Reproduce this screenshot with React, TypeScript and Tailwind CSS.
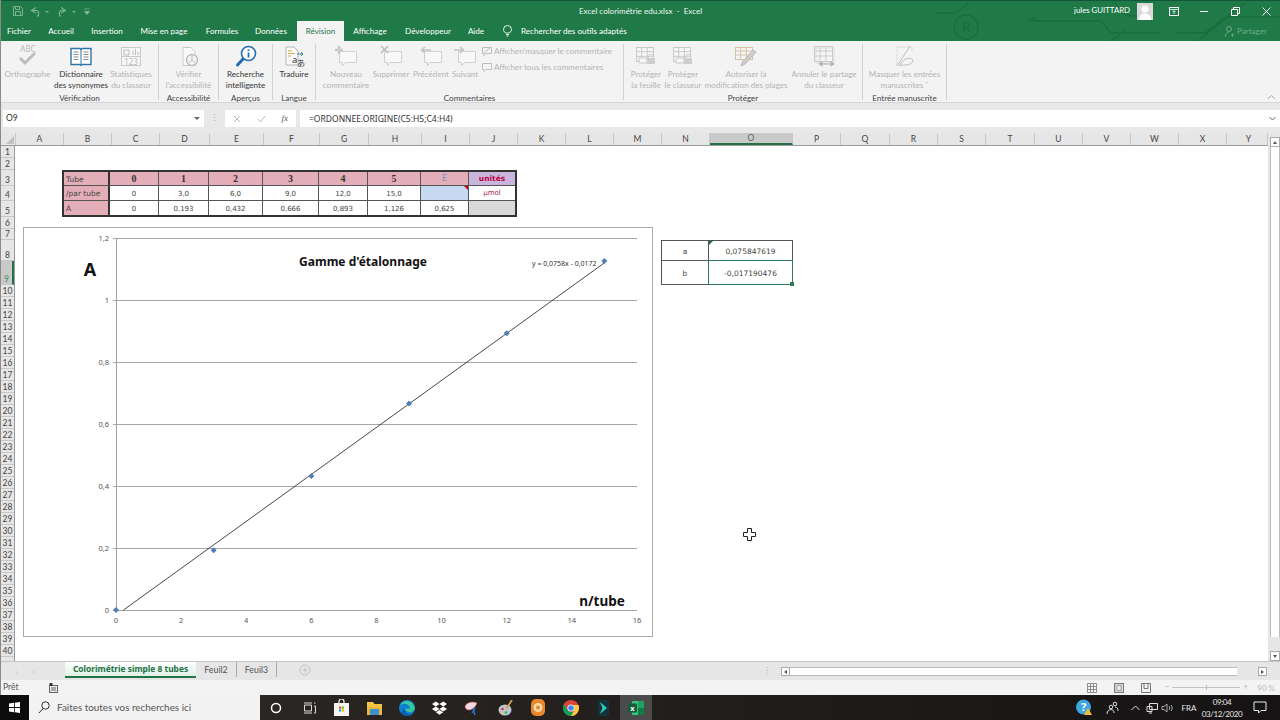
import React from "react";

const G = "#c9c9c9";
const FONT = "font-['Lato','Noto_Sans',sans-serif]";
const NOTO = "font-['Noto_Sans',sans-serif]";

const SheetGrid = ({ x, y, w, h, c = G }: { x: number; y: number; w: number; h: number; c?: string }) => (
  <g stroke={c} strokeWidth="1" fill="#f6f6f6">
    <rect x={x + 0.5} y={y + 0.5} width={w} height={h} />
    <path d={`M${x + w / 3} ${y}V${y + h}M${x + (2 * w) / 3} ${y}V${y + h}M${x} ${y + h / 3}H${x + w}M${x} ${y + (2 * h) / 3}H${x + w}`} fill="none" />
  </g>
);

const IconBox = ({ w = 28, children }: { w?: number; children: React.ReactNode }) => (
  <svg width={w} height={24} viewBox={`0 0 ${w} 24`} className="block">
    {children}
  </svg>
);

const IAbc = () => (
  <IconBox>
    <text x="14" y="8" textAnchor="middle" fontSize="8" fill="#b9b9b9" fontFamily="Noto Sans">ABC</text>
    <path d="M6 14l5 5 10-10" fill="none" stroke="#bdbdbd" strokeWidth="3" />
  </IconBox>
);
const IBook = () => (
  <IconBox>
    <path d="M4 4.5h9l1 1 1-1h9v16h-9l-1 .8-1-.8H4z" fill="#fff" stroke="#2f74a8" strokeWidth="1.4" />
    <path d="M14 5.5v15" stroke="#2f74a8" strokeWidth="1" />
    <path d="M6.5 8h5M6.5 10.5h5M6.5 13h5M6.5 15.5h5M16.5 8h5M16.5 10.5h5M16.5 13h5M16.5 15.5h5" stroke="#7c7c7c" strokeWidth="0.9" />
  </IconBox>
);
const IStats = () => (
  <IconBox>
    <rect x="4.5" y="3.5" width="19" height="18" fill="#f6f6f6" stroke={G} />
    <path d="M7 6h5v5H7zM16 11V7M18.5 11V5M21 11V8" fill="none" stroke="#bdbdbd" />
    <path d="M4.5 12.5h19" stroke={G} />
    <text x="14" y="20.5" textAnchor="middle" fontSize="8" fill="#bdbdbd" fontFamily="Noto Sans">123</text>
  </IconBox>
);
const IDoc = () => (
  <IconBox>
    <path d="M8 3.5h8l4 4v14H8z" fill="#fafafa" stroke={G} />
    <circle cx="17" cy="16" r="5.5" fill="#f4f4f4" stroke="#bcbcbc" strokeWidth="1.4" />
    <path d="M17 11v5l-3.5 3M17 16l3.5 3" stroke="#bcbcbc" fill="none" />
  </IconBox>
);
const IMag = () => (
  <IconBox>
    <circle cx="16.5" cy="9.5" r="7" fill="#fff" stroke="#1f6cb0" strokeWidth="1.6" />
    <path d="M16.5 5.5v1.4M16.5 8.5v5" stroke="#1f6cb0" strokeWidth="1.8" />
    <path d="M11 15L5.5 21" stroke="#1f6cb0" strokeWidth="3" strokeLinecap="round" />
  </IconBox>
);
const ITrans = () => (
  <IconBox>
    <path d="M6 3h8l4 4v14H6z" fill="#fafafa" stroke="#b5b5b5" />
    <path d="M8 7h4M8 9.5h7M8 12h3" stroke="#d4a94e" strokeWidth="1" />
    <text x="12" y="19" fontSize="9.5" fill="#333" fontFamily="Noto Sans">a</text>
    <text x="17" y="22" fontSize="8" fill="#333" fontFamily="Noto Sans CJK JP">あ</text>
    <path d="M17 10h6M21 8l2 2-2 2" stroke="#2f74a8" fill="none" strokeWidth="0.9" />
  </IconBox>
);
const Bubble = ({ x = 7 }: { x?: number }) => (
  <path d={`M${x + 0.5} 7.5h17v11h-11l-3 3v-3h-3z`} fill="#f8f8f8" stroke="#d0d0d0" />
);
const INew = () => (
  <IconBox>
    <Bubble />
    <path d="M7 2v8M3 6h8" stroke="#c8c8c8" strokeWidth="2.6" />
  </IconBox>
);
const IDel = () => (
  <IconBox>
    <Bubble />
    <path d="M4 2l7 7M11 2L4 9" stroke="#bbb" strokeWidth="1.6" />
  </IconBox>
);
const ILeft = () => (
  <IconBox>
    <Bubble />
    <path d="M14 6H5M8 3L4.5 6 8 9" stroke="#c4c4c4" strokeWidth="1.6" fill="none" />
  </IconBox>
);
const IRight = () => (
  <IconBox>
    <Bubble />
    <path d="M3 6h9M9 3l3.5 3L9 9" stroke="#c4c4c4" strokeWidth="1.6" fill="none" />
  </IconBox>
);
const Lock = ({ x, y }: { x: number; y: number }) => (
  <g>
    <rect x={x} y={y + 3} width="8" height="6" fill="#cdcdcd" />
    <path d={`M${x + 1.5} ${y + 3}v-1.2a2.5 2.5 0 0 1 5 0v1.2`} fill="none" stroke="#cdcdcd" />
  </g>
);
const ILock = () => (
  <IconBox>
    <SheetGrid x={4} y={3} w={17} h={14} />
    <path d="M7 14h8v5H7z" fill="#f6f6f6" stroke={G} />
    <Lock x={15} y={11} />
  </IconBox>
);
const IPencil = () => (
  <IconBox>
    <SheetGrid x={3} y={3} w={17} h={12} c="#d3c4a8" />
    <path d="M24 8L13 20l-4 2 1.500-4L21 6z" fill="#cfcfcf" stroke="#b8b8b8" />
  </IconBox>
);
const IShare = () => (
  <IconBox>
    <SheetGrid x={4} y={2} w={18} h={15} />
    <rect x="6" y="4" width="18" height="15" fill="none" stroke="#dcdcdc" />
    <path d="M10 20h13M12.500 18l-3 2 3 2M20.500 18l3 2-3 2" stroke="#a9a9a9" fill="none" strokeWidth="1.1" />
  </IconBox>
);
const IInk = () => (
  <IconBox>
    <path d="M6 3h15v4M6 3v19" stroke="#cfcfcf" strokeDasharray="1.500 1" fill="none" />
    <path d="M6 22L19 2M9 21c3-6 8-8 12-6 3 3-2 6-7 6-2 0-4 0-6 1" stroke="#bdbdbd" fill="none" />
  </IconBox>
);

const RBtn = ({ w, icon, l1, l2, on }: { w: string; icon: React.ReactNode; l1: string; l2?: string; on?: boolean }) => (
  <div className={`${w} flex flex-col items-center shrink-0`}>
    <div className="h-[25px] flex items-start justify-center">{icon}</div>
    <div className={`h-[11px] leading-[11px] whitespace-nowrap ${on ? "text-[#333]" : "text-[#b4b4b4]"}`}>{l1}</div>
    {l2 && <div className={`h-[11px] leading-[11px] whitespace-nowrap ${on ? "text-[#333]" : "text-[#b4b4b4]"}`}>{l2}</div>}
  </div>
);

const Group = ({ w, label, children }: { w: string; label: string; children: React.ReactNode }) => (
  <div className={`${w} shrink-0 flex flex-col h-[59px] pt-[3px]`}>
    <div className="flex h-[48px] shrink-0">{children}</div>
    <div className="text-center text-[#444] leading-[13px] whitespace-nowrap">{label}</div>
  </div>
);
const Sep = () => <div className="w-px h-[56px] mt-[3px] bg-[#d2d2d2] shrink-0" />;

const tabs = [
  { t: "Fichier", w: "w-[36px]" },
  { t: "Accueil", w: "w-[48px]" },
  { t: "Insertion", w: "w-[44px]" },
  { t: "Mise en page", w: "w-[70px]" },
  { t: "Formules", w: "w-[46px]" },
  { t: "Données", w: "w-[52px]" },
  { t: "Révision", w: "w-[47px]", active: true },
  { t: "Affichage", w: "w-[52px]" },
  { t: "Développeur", w: "w-[64px]" },
  { t: "Aide", w: "w-[32px]" },
];

const cols = [
  ["A", "w-[48px]"], ["B", "w-[48px]"], ["C", "w-[48px]"], ["D", "w-[50px]"], ["E", "w-[54px]"], ["F", "w-[56px]"], ["G", "w-[49px]"], ["H", "w-[53px]"],
  ["I", "w-[48px]"], ["J", "w-[48px]"], ["K", "w-[48px]"], ["L", "w-[48px]"], ["M", "w-[48px]"], ["N", "w-[48px]"], ["O", "w-[83px]"], ["P", "w-[48px]"],
  ["Q", "w-[49px]"], ["R", "w-[48px]"], ["S", "w-[48px]"], ["T", "w-[49px]"], ["U", "w-[48px]"], ["V", "w-[48px]"], ["W", "w-[48px]"], ["X", "w-[48px]"], ["Y", "w-[41px] pl-[3px]"],
];

const rowHeights: Record<number, string> = { 3: "h-[16px]", 4: "h-[15px]", 5: "h-[16px]", 7: "h-[11px]", 8: "h-[21px]", 9: "h-[24px]" };
const rows = Array.from({ length: 40 }, (_, i) => i + 1);

const Cell = ({ c, children }: { c: string; children?: React.ReactNode }) => (
  <div className={`relative flex items-center justify-center border-r border-b border-[#555] ${c}`}>{children}</div>
);

const numFont = "font-['DejaVu_Sans',sans-serif] text-[7px] text-[#444] pt-[2px]";
const headFont = "font-['Liberation_Serif',serif] font-bold text-[10px] text-[#333] bg-[#e4aeb9]";
const labFont = "!justify-start pl-[2px] pt-[2px] font-['DejaVu_Sans',sans-serif] text-[7.500px] text-[#444] bg-[#e4aeb9]";

const SheetTable = () => (
  <div className="ml-[47px] mt-[24px] w-[455px] h-[47px] border-2 border-[#333] grid grid-cols-[46px_49px_50px_54px_56px_49px_53px_48px_46px] grid-rows-[14px_15px_14px]">
    <Cell c={`${labFont} border-r-2 border-r-[#333]`}>Tube</Cell>
    {["0", "1", "2", "3", "4", "5"].map((v) => (
      <Cell key={v} c={headFont}>{v}</Cell>
    ))}
    <Cell c="bg-[#e4aeb9] text-[8px] text-[#7f8cc8] font-['DejaVu_Sans',sans-serif]">E</Cell>
    <Cell c="bg-[#c9b6dd] text-[7.500px] font-bold text-[#b8003f] font-['DejaVu_Sans',sans-serif] border-r-0">unités</Cell>

    <Cell c={`${labFont} border-r-2 border-r-[#333]`}>/par tube</Cell>
    {["0", "3,0", "6,0", "9,0", "12,0", "15,0"].map((v, i) => (
      <Cell key={i} c={numFont}>{v}</Cell>
    ))}
    <Cell c="bg-[#c6d9f1]">
      <span className="absolute top-0 right-0 w-0 h-0 border-t-[4px] border-l-[4px] border-t-[#c00000] border-l-transparent" />
    </Cell>
    <Cell c="text-[7px] text-[#a6244f] font-['DejaVu_Sans',sans-serif] border-r-0">µmol</Cell>

    <Cell c={`${labFont} border-r-2 border-r-[#333] border-b-0`}>A</Cell>
    {["0", "0,193", "0,432", "0,666", "0,893", "1,126", "0,625"].map((v, i) => (
      <Cell key={i} c={`${numFont} border-b-0`}>{v}</Cell>
    ))}
    <Cell c="bg-[#d9d9d9] border-r-0 border-b-0" />
  </div>
);

const px = (x: number) => 116 + x * 32.56;
const py = (y: number) => 610 - y * 310;

const Chart = () => (
  <div className="w-[630px] h-[410px] border border-[#a9a9a9] bg-white shrink-0">
    <svg width="628" height="408" viewBox="24 228 628 408" className="block">
      {[0.2, 0.4, 0.6, 0.8, 1, 1.2].map((v) => (
        <path key={v} d={`M113 ${py(v)}H637`} stroke="#a6a6a6" strokeWidth="1" shapeRendering="crispEdges" />
      ))}
      <path d="M116 238V610M113 610H637" stroke="#a0a0a0" strokeWidth="1" fill="none" shapeRendering="crispEdges" />
      {[0, 2, 4, 6, 8, 10, 12, 14, 16].map((v) => (
        <text key={v} x={px(v)} y="623" textAnchor="middle" fontSize="7.500" fill="#555" fontFamily="Noto Sans">{v}</text>
      ))}
      {[["0", 0], ["0,2", 0.2], ["0,4", 0.4], ["0,6", 0.6], ["0,8", 0.8], ["1", 1], ["1,2", 1.2]].map(([l, v]) => (
        <text key={l as string} x="109" y={py(v as number) + 2.5} textAnchor="end" fontSize="7.500" fill="#555" fontFamily="Noto Sans">{l}</text>
      ))}
      <path d={`M${px(0.23)} 610L${px(15)} ${py(1.1198)}`} stroke="#333" strokeWidth="0.9" />
      {[[0, 0], [3, 0.193], [6, 0.432], [9, 0.666], [12, 0.893], [15, 1.126]].map(([a, b]) => (
        <path key={a} d={`M${px(a)} ${py(b) - 3}l3 3-3 3-3-3z`} fill="#4f7fb8" />
      ))}
      <text x="363" y="266" textAnchor="middle" fontSize="12" fontWeight="700" fill="#111" fontFamily="Noto Sans">Gamme d'étalonnage</text>
      <text x="90" y="276" textAnchor="middle" fontSize="18" fontWeight="700" fill="#111" fontFamily="Noto Sans">A</text>
      <text x="602" y="606" textAnchor="middle" fontSize="13.500" fontWeight="700" fill="#111" fontFamily="Noto Sans">n/tube</text>
      <text x="532" y="265.500" fontSize="7" fill="#333" fontFamily="Noto Sans">y = 0,0758x - 0,0172</text>
    </svg>
  </div>
);

const AbTable = () => (
  <div className="ml-[8px] mt-[13px] grid grid-cols-[47px_83px] grid-rows-[20px_23px] border border-[#555] w-[132px] h-[45px] text-[7.500px] text-[#444] font-['DejaVu_Sans',sans-serif] shrink-0">
    <div className="flex items-center justify-center pt-[2px] border-r border-b border-[#555]">a</div>
    <div className="relative flex items-center justify-center pt-[2px] border-b border-[#555]">
      0,075847619
      <span className="absolute top-0 left-0 w-0 h-0 border-t-[4px] border-r-[4px] border-t-[#217346] border-r-transparent" />
    </div>
    <div className="flex items-center justify-center pt-[2px] border-r border-[#555]">b</div>
    <div className="relative flex items-center justify-center pt-[2px] outline outline-[1.500px] outline-[#2f7d57]">
      -0,017190476
      <span className="absolute -bottom-[2px] -right-[2px] w-[4px] h-[4px] bg-[#2f7d57]" />
    </div>
  </div>
);

const Tray = ({ w, children }: { w: string; children: React.ReactNode }) => (
  <div className={`${w} h-full flex items-center justify-center shrink-0`}>{children}</div>
);
const TB = ({ children, c = "" }: { children: React.ReactNode; c?: string }) => (
  <div className={`w-[32.700px] h-full flex items-center justify-center shrink-0 ${c}`}>{children}</div>
);

export default function App() {
  return (
    <div className={`w-[1280px] h-[720px] overflow-hidden flex flex-col text-[8.500px] ${FONT}`}>
      <div className="h-[695px] flex flex-col border-l border-[#8a8a8a] shrink-0">
        {/* Green header */}
        <div className="relative h-[41px] shrink-0 bg-[#1f7a47] border-t border-[#14563a] text-white">
          <svg width="345" height="41" viewBox="0 0 345 41" className="absolute right-0 top-0">
            <g stroke="#1b6d40" strokeWidth="1.400" fill="none">
              <circle cx="31" cy="26" r="12" />
              <path d="M0 12H20L34 2M96 20h70l10 12h50M100 20a3 3 0 1 0-6 0M180 0c4 18 30 22 40 0M240 32h30l40-30M262 41l30-25h53M175 41l15-12" />
            </g>
            <text x="31" y="31" textAnchor="middle" fontSize="14" fill="#1b6d40" fontFamily="Noto Sans">R</text>
          </svg>
          <div className="relative grid grid-cols-[1fr_auto_1fr] h-[20px] items-center">
            <div className="flex items-center pl-[11px] gap-[4px] opacity-50">
              <svg width="12" height="12" viewBox="0 0 12 12">
                <path d="M1.500 1.500h7l2 2v7h-9z" fill="none" stroke="#d7ead9" />
                <path d="M3.500 1.500v3h4v-3M3.500 10.500v-4h5v4" fill="none" stroke="#d7ead9" />
              </svg>
              <svg width="24" height="12" viewBox="0 0 24 12">
                <path d="M8 2.500L3.500 5.500 8 8M4 5.500h5a3.500 3.500 0 0 1 0 6" fill="none" stroke="#d7ead9" strokeWidth="1.200" />
                <path d="M17 6h4l-2 2z" fill="#d7ead9" />
              </svg>
              <svg width="24" height="12" viewBox="0 0 24 12">
                <path d="M5 2.500L9.500 5.500 5 8M9 5.500H5a3.500 3.500 0 0 0 0 6" fill="none" stroke="#d7ead9" strokeWidth="1.200" />
                <path d="M16 6h4l-2 2z" fill="#d7ead9" />
              </svg>
              <svg width="6" height="7" viewBox="0 0 6 7">
                <path d="M0 1h6M.5 3.500h5L3 6.500z" fill="#fff" stroke="#fff" strokeWidth=".6" />
              </svg>
            </div>
            <div className="whitespace-pre text-[8.050px] text-[#eef6f0]">Excel colorimétrie edu.xlsx  -  Excel</div>
            <div className="flex items-center justify-end h-full">
              <span className="text-[7.800px] mr-[7px]">jules GUITTARD</span>
              <div className="w-[16px] h-[17px] bg-[#f2f2f2] mr-[16px] flex items-end justify-center overflow-hidden">
                <svg width="16" height="17" viewBox="0 0 16 17">
                  <rect width="16" height="17" fill="#d9d9d9" />
                  <circle cx="8" cy="6" r="3.500" fill="#fff" />
                  <path d="M2 17c0-5 3-6.500 6-6.500S14 12 14 17z" fill="#fff" />
                </svg>
              </div>
              <svg width="10" height="9" viewBox="0 0 10 9" className="mr-[21px]">
                <rect x="0.500" y="0.500" width="9" height="8" fill="none" stroke="#fff" />
                <path d="M0 2.500h10M5 7V4M3.500 5L5 3.500 6.500 5" stroke="#fff" fill="none" strokeWidth="0.800" />
              </svg>
              <svg width="8" height="8" viewBox="0 0 8 8" className="mr-[23px]"><path d="M0 4.500h8" stroke="#fff" /></svg>
              <svg width="9" height="9" viewBox="0 0 9 9" className="mr-[22px]">
                <path d="M0.500 2.500h6v6h-6zM2.500 2.500v-2h6v6h-2" fill="none" stroke="#fff" />
              </svg>
              <svg width="9" height="9" viewBox="0 0 9 9" className="mr-[9px]"><path d="M0.500 0.500l8 8M8.500 0.500l-8 8" stroke="#fff" /></svg>
            </div>
          </div>
          <div className="relative flex h-[20px] items-stretch text-[8.100px]">
            {tabs.map((t) => (
              <div key={t.t} className={`${t.w} flex items-center justify-center whitespace-nowrap shrink-0 ${t.active ? "bg-[#f3f3f3] text-[#217346]" : "text-white"}`}>
                {t.t}
              </div>
            ))}
            <div className="flex items-center ml-[11px]">
              <svg width="9" height="12" viewBox="0 0 9 12">
                <path d="M2.500 8C1 6.500.500 5.500.500 4.500a4 4 0 0 1 8 0C8.500 5.500 8 6.500 6.500 8zM3 9.500h3M3.500 11h2" fill="none" stroke="#fff" strokeWidth="0.900" />
              </svg>
              <span className="ml-[9px] whitespace-nowrap">Rechercher des outils adaptés</span>
            </div>
            <div className="ml-auto mr-[13px] flex items-center gap-[3px] text-[#6da98a]">
              <svg width="9" height="11" viewBox="0 0 9 11">
                <circle cx="4" cy="3" r="2.500" fill="none" stroke="#6da98a" />
                <path d="M.5 10.500c0-3 1.500-4.500 3.500-4.500M6 9h3M7.500 7.500v3" fill="none" stroke="#6da98a" />
              </svg>
              <span>Partager</span>
            </div>
          </div>
        </div>

        {/* Ribbon */}
        <div className="h-[62px] shrink-0 bg-[#f3f3f3] border-b border-[#d6d6d6] flex relative text-[8.100px]">
          <Group w="w-[157px]" label="Vérification">
            <RBtn w="w-[53px]" icon={<IAbc />} l1="Orthographe" />
            <RBtn w="w-[54px]" icon={<IBook />} l1="Dictionnaire" l2="des synonymes" on />
            <RBtn w="w-[46px]" icon={<IStats />} l1="Statistiques" l2="du classeur" />
          </Group>
          <Sep />
          <Group w="w-[59px]" label="Accessibilité">
            <RBtn w="w-[59px]" icon={<IDoc />} l1="Vérifier" l2="l'accessibilité" />
          </Group>
          <Sep />
          <Group w="w-[53px]" label="Aperçus">
            <RBtn w="w-[53px]" icon={<IMag />} l1="Recherche" l2="intelligente" on />
          </Group>
          <Sep />
          <Group w="w-[42px]" label="Langue">
            <RBtn w="w-[42px]" icon={<ITrans />} l1="Traduire" on />
          </Group>
          <Sep />
          <Group w="w-[307px]" label="Commentaires">
            <RBtn w="w-[60px]" icon={<INew />} l1="Nouveau" l2="commentaire" />
            <RBtn w="w-[30px]" icon={<IDel />} l1="Supprimer" />
            <RBtn w="w-[50px]" icon={<ILeft />} l1="Précédent" />
            <RBtn w="w-[18px]" icon={<IRight />} l1="Suivant" />
            <div className="ml-[8px] flex flex-col text-[#b4b4b4] whitespace-nowrap pt-[1px] gap-[4px]">
              <div className="h-[12px] flex items-center gap-[2px]">
                <svg width="10" height="10" viewBox="0 0 10 10">
                  <path d="M.5 1.500h9v6H4L2 9.500v-2H.5zM2 7l6-5" fill="none" stroke="#bdbdbd" />
                </svg>
                Afficher/masquer le commentaire
              </div>
              <div className="h-[12px] flex items-center gap-[2px]">
                <svg width="10" height="10" viewBox="0 0 10 10">
                  <path d="M.5 1.500h9v6H4L2 9.500v-2H.5z" fill="none" stroke="#bdbdbd" />
                </svg>
                Afficher tous les commentaires
              </div>
            </div>
          </Group>
          <Sep />
          <Group w="w-[238px]" label="Protéger">
            <RBtn w="w-[44px]" icon={<ILock />} l1="Protéger" l2="la feuille" />
            <RBtn w="w-[30px]" icon={<ILock />} l1="Protéger" l2="le classeur" />
            <RBtn w="w-[96px]" icon={<IPencil />} l1="Autoriser la" l2="modification des plages" />
            <RBtn w="w-[60px]" icon={<IShare />} l1="Annuler le partage" l2="du classeur" />
          </Group>
          <Sep />
          <Group w="w-[83px]" label="Entrée manuscrite">
            <RBtn w="w-[83px]" icon={<IInk />} l1="Masquer les entrées" l2="manuscrites ˇ" />
          </Group>
          <Sep />
          <svg width="9" height="6" viewBox="0 0 9 6" className="absolute right-[4px] bottom-[2px]">
            <path d="M1 5l3.500-3.500L8 5" fill="none" stroke="#aaa" />
          </svg>
        </div>

        {/* Formula bar */}
        <div className="h-[30px] shrink-0 bg-[#e8e8e8] flex pt-[7px] pb-[6px] items-stretch">
          <div className="w-[201px] ml-[2px] bg-white flex items-center justify-between pl-[3px] pr-[4px] text-[#333]">
            <span>O9</span>
            <span className="w-0 h-0 border-x-[3px] border-x-transparent border-t-[3px] border-t-[#666]" />
          </div>
          <div className="w-[21px] flex items-center justify-center text-[#aaa] leading-none">⋮</div>
          <div className="w-[71px] bg-white flex items-center justify-between px-[8px]">
            <svg width="8" height="8" viewBox="0 0 8 8"><path d="M1 1l6 6M7 1L1 7" stroke="#bbb" /></svg>
            <svg width="9" height="8" viewBox="0 0 9 8"><path d="M1 4l2.500 3L8 1" stroke="#bbb" fill="none" /></svg>
            <span className="italic font-['Liberation_Serif',serif] text-[9px] text-[#555]">fx</span>
          </div>
          <div className="flex-1 ml-[4px] bg-white flex items-center justify-between pl-[9px] pr-[4px] text-[#333]">
            <span className={`${NOTO} text-[8.500px] pt-px`}>=ORDONNEE.ORIGINE(C5:H5;C4:H4)</span>
            <svg width="7" height="5" viewBox="0 0 7 5"><path d="M.5 1l3 3 3-3" fill="none" stroke="#666" /></svg>
          </div>
        </div>

        {/* Sheet */}
        <div className="h-[528px] shrink-0 flex overflow-hidden">
          <div className="flex-1 flex flex-col min-w-0">
            <div className="h-[13px] flex shrink-0 bg-[#e6e6e6] border-b border-[#9a9a9a] text-[#444] text-[8.500px]">
              <div className="w-[15px] shrink-0 border-r border-[#c8c8c8] relative">
                <span className="absolute right-[1px] bottom-[1px] w-0 h-0 border-b-[8px] border-l-[8px] border-b-[#c2c2c2] border-l-transparent" />
              </div>
              {cols.map(([n, w]) => (
                <div key={n} className={`${w} shrink-0 flex items-center justify-center border-r border-[#c8c8c8] ${n === "O" ? "bg-[#c9c9c9] border-b-2 border-b-[#217346] text-[#666]" : ""}`}>
                  {n}
                </div>
              ))}
            </div>
            <div className="flex-1 flex min-h-0">
              <div className="w-[14px] shrink-0 bg-[#e6e6e6] border-r border-[#9a9a9a] text-[#444] text-[8.500px] overflow-hidden">
                {rows.map((r) => (
                  <div
                    key={r}
                    className={`${rowHeights[r] ?? "h-[12px]"} flex items-end justify-center leading-[9px] border-b border-[#c8c8c8] ${r === 9 ? "bg-[#c9c9c9] border-r-2 border-r-[#217346] text-[#4f8a6c]" : ""}`}
                  >
                    {r}
                  </div>
                ))}
              </div>
              <div className="flex-1 relative bg-white min-w-0">
                <SheetTable />
                <div className="flex mt-[10px] ml-[8px]">
                  <Chart />
                  <AbTable />
                </div>
                <svg width="13" height="13" viewBox="0 0 13 13" className="absolute left-[728px] top-[382px]">
                  <path d="M4.500.5h4v4h4v4h-4v4h-4v-4h-4v-4h4z" fill="#fff" stroke="#222" />
                </svg>
              </div>
            </div>
          </div>
          <div className="w-[12px] shrink-0 bg-[#e6e6e6] flex flex-col items-end">
            <div className="h-[4px]" />
            <div className="w-[10px] h-[10px] bg-white border border-[#aaa] flex items-center justify-center">
              <span className="w-0 h-0 border-x-[2.500px] border-x-transparent border-b-[3px] border-b-[#555]" />
            </div>
            <div className="w-[10px] h-[490px] bg-white border-x border-[#bbb]" />
            <div className="flex-1" />
            <div className="w-[10px] h-[10px] bg-white border border-[#aaa] flex items-center justify-center">
              <span className="w-0 h-0 border-x-[2.500px] border-x-transparent border-t-[3px] border-t-[#555]" />
            </div>
          </div>
        </div>

        {/* Sheet tabs */}
        <div className="h-[19px] shrink-0 bg-[#e6e6e6] border-t border-[#c4c4c4] flex items-start text-[#555] text-[8.800px]">
          <div className="w-[64px] h-full flex items-center pl-[14px] gap-[15px] text-[#b5b5b5] text-[8px] shrink-0">
            <span>‹</span>
            <span>›</span>
          </div>
          <div className={`w-[131px] h-[16px] bg-gradient-to-b from-white to-[#dff0e6] border-b-2 border-[#217346] flex items-center justify-center font-bold text-[#217346] text-[8.400px] whitespace-nowrap shrink-0 ${NOTO}`}>
            Colorimétrie simple 8 tubes
          </div>
          <div className="w-[41px] h-[15px] flex items-center justify-center border-r border-[#aaa] shrink-0">Feuil2</div>
          <div className="w-[40px] h-[15px] flex items-center justify-center border-r border-[#aaa] shrink-0">Feuil3</div>
          <div className="ml-[22px] h-[15px] flex items-center shrink-0">
            <svg width="12" height="12" viewBox="0 0 12 12">
              <circle cx="6" cy="6" r="5" fill="none" stroke="#c4c4c4" />
              <path d="M6 3.500v5M3.500 6h5" stroke="#c4c4c4" />
            </svg>
          </div>
          <div className="ml-[452px] h-full flex items-center text-[#aaa] shrink-0">⋮</div>
          <div className="ml-[9px] mt-[5px] w-[9px] h-[9px] bg-white border border-[#aaa] flex items-center justify-center shrink-0">
            <span className="w-0 h-0 border-y-[2.500px] border-y-transparent border-r-[3px] border-r-[#555]" />
          </div>
          <div className="mt-[5px] w-[447px] h-[9px] bg-white border-y border-[#bbb] shrink-0" />
          <div className="w-[21px] shrink-0" />
          <div className="mt-[5px] w-[9px] h-[9px] bg-white border border-[#aaa] flex items-center justify-center shrink-0">
            <span className="w-0 h-0 border-y-[2.500px] border-y-transparent border-l-[3px] border-l-[#555]" />
          </div>
        </div>

        {/* Status bar */}
        <div className="h-[15px] flex-1 bg-[#f3f3f3] flex items-center text-[#555] text-[8.500px]">
          <span className="ml-[2px] w-[46px]">Prêt</span>
          <svg width="9" height="10" viewBox="0 0 9 10">
            <rect x=".5" y="2.500" width="8" height="7" fill="#e8e8e8" stroke="#666" />
            <path d="M.5 0h3v3h-3z" fill="#333" />
            <path d="M2 5h5M2 7h5" stroke="#666" />
          </svg>
          <div className="ml-auto flex items-center text-[#bdbdbd]">
            <svg width="10" height="10" viewBox="0 0 10 10" className="mr-[17px]">
              <path d="M.5.5h9v9h-9zM3.500.5v9M6.500.5v9M.5 3.500h9M.5 6.500h9" fill="none" stroke="#777" strokeWidth=".8" />
            </svg>
            <svg width="10" height="10" viewBox="0 0 10 10" className="mr-[17px]">
              <rect x=".5" y=".5" width="9" height="9" fill="#d5d5d5" stroke="#777" />
              <path d="M3 2.500h4v5H3z" fill="#eee" stroke="#777" strokeWidth=".6" />
            </svg>
            <svg width="10" height="10" viewBox="0 0 10 10" className="mr-[13px]">
              <path d="M.5.5h9v9h-9zM3 .5v5h4v-5" fill="none" stroke="#777" />
            </svg>
            <span className="mr-[3px]">−</span>
            <div className="relative w-[68px] h-px bg-[#c4c4c4] mr-[3px]">
              <span className="absolute left-[34px] -top-[2px] w-px h-[5px] bg-[#bbb]" />
            </div>
            <span className="mr-[9px]">+</span>
            <span className="mr-[5px] text-[8px] whitespace-nowrap">90 %</span>
          </div>
        </div>
      </div>

      {/* Taskbar */}
      <div className="h-[25px] shrink-0 flex bg-gradient-to-r from-[#302b28] to-[#151313] text-[#e6e6e6]">
        <div className="w-[29px] h-full bg-[#0c0c0c] flex items-center justify-center shrink-0">
          <svg width="11" height="11" viewBox="0 0 11 11">
            <path d="M0 1.500L5 .8v4.300H0zM5.800.7L11 0v5.100H5.800zM0 5.900h5v4.300L0 9.500zM5.800 5.900H11V11l-5.200-.7z" fill="#fff" />
          </svg>
        </div>
        <div className="w-[231px] h-full bg-[#f2f2f2] flex items-center pl-[9px] text-[#555] text-[9.900px] shrink-0">
          <svg width="12" height="13" viewBox="0 0 12 13" className="mr-[7px]">
            <circle cx="7.500" cy="4.500" r="3.700" fill="none" stroke="#333" />
            <path d="M5 7.500L1 12" stroke="#333" />
          </svg>
          <span className="whitespace-nowrap">Faites toutes vos recherches ici</span>
        </div>
        <TB>
          <svg width="12" height="12" viewBox="0 0 12 12"><circle cx="6" cy="6" r="4.500" fill="none" stroke="#fff" strokeWidth="1.500" /></svg>
        </TB>
        <TB>
          <svg width="13" height="12" viewBox="0 0 13 12">
            <path d="M1.500 3h7v6h-7z" fill="none" stroke="#ddd" />
            <path d="M1 1h8M1 11h8M11 1h1.500M11 4h1.500v7H11" stroke="#ddd" fill="none" />
          </svg>
        </TB>
        <TB>
          <svg width="15" height="17" viewBox="0 0 15 17">
            <path d="M0 4h15v13H0z" fill="#f4f4f4" />
            <path d="M5 4V2.500a2.500 2.500 0 0 1 5 0V4" fill="none" stroke="#f4f4f4" strokeWidth="1.200" />
            <path d="M5 7.500h2.200v2.200H5z" fill="#f25022" />
            <path d="M7.800 7.500H10v2.200H7.800z" fill="#7fba00" />
            <path d="M5 10.300h2.200v2.200H5z" fill="#00a4ef" />
            <path d="M7.800 10.300H10v2.200H7.800z" fill="#ffb900" />
          </svg>
        </TB>
        <TB>
          <svg width="15" height="14" viewBox="0 0 15 14">
            <path d="M0 1h6l1.500 2H15v11H0z" fill="#f4c542" />
            <path d="M0 6h15v8H0z" fill="#e8b93a" />
            <path d="M3 8h9v6H3z" fill="#3f8fc9" />
          </svg>
        </TB>
        <TB>
          <svg width="16" height="16" viewBox="0 0 16 16">
            <circle cx="8" cy="8" r="8" fill="#0f7fd0" />
            <path d="M16 8.500C15.500 4 12 1 8 1 4.500 1 2 3 1.200 5.500 3 3.800 6 3.200 8.500 4.500c2 1 2.700 2.800 2.200 4.300H6c.2 2.700 3.500 4.500 8 2.500.8-.8 1.800-1.500 2-2.800z" fill="#36c6a0" />
            <path d="M6 9c0 3 2.500 6 7 5-1.500 1.300-3 2-5 2a8 8 0 0 1-6-3c1-2 2-4 4-4z" fill="#0a5ba8" />
          </svg>
        </TB>
        <TB>
          <svg width="15" height="14" viewBox="0 0 15 14">
            <path d="M3.800.5L7.500 3 3.800 5.500 0 3zM11.200.5L15 3l-3.800 2.500L7.500 3zM3.800 5.500L7.500 8 3.800 10.500 0 8zM11.200 5.500L15 8l-3.800 2.500L7.500 8zM3.800 11.300l3.700-2.400 3.700 2.400-3.700 2.500z" fill="#fff" />
          </svg>
        </TB>
        <TB>
          <svg width="16" height="16" viewBox="0 0 16 16">
            <path d="M1 6c2-4 8-5 12-3-1 3-3 6-7 7-3 .5-5-1-5-4z" fill="#f3d9de" stroke="#b44" strokeWidth=".6" />
            <path d="M9 8l2 7M11 8l-3 5" stroke="#2f74c8" strokeWidth="1.400" />
          </svg>
        </TB>
        <TB>
          <svg width="15" height="16" viewBox="0 0 15 16">
            <ellipse cx="7" cy="10" rx="6.500" ry="5.500" fill="#b9c6cf" />
            <circle cx="4.500" cy="9" r="1.300" fill="#d33" />
            <circle cx="8" cy="12.500" r="1.300" fill="#3a8" />
            <circle cx="4.500" cy="12.500" r="1" fill="#fc0" />
            <path d="M14 0L8 9" stroke="#d9a441" strokeWidth="1.800" />
          </svg>
        </TB>
        <TB>
          <svg width="16" height="17" viewBox="0 0 16 17">
            <rect x="1" y="0" width="14" height="17" rx="5" fill="#e8872b" />
            <circle cx="8" cy="8.500" r="4.500" fill="#f7d9a8" />
            <circle cx="8" cy="8.500" r="2" fill="#e8872b" />
          </svg>
        </TB>
        <TB>
          <svg width="16" height="16" viewBox="0 0 16 16">
            <circle cx="8" cy="8" r="8" fill="#db4437" />
            <path d="M8 16A8 8 0 0 1 1 4l4 7 3 1 3 0-3 4z" fill="#0f9d58" />
            <path d="M16 8a8 8 0 0 1-8 8l3.500-6L11 5h4.500c.3 1 .5 2 .5 3z" fill="#ffcd40" />
            <circle cx="8" cy="8" r="3.600" fill="#fff" />
            <circle cx="8" cy="8" r="2.800" fill="#4285f4" />
          </svg>
        </TB>
        <TB>
          <svg width="11" height="16" viewBox="0 0 11 16">
            <rect width="11" height="16" fill="#14323c" />
            <path d="M2 2l7 6-7 6 2.500-6z" fill="#2ecfc0" />
          </svg>
        </TB>
        <TB c="bg-[#4b4b4b]">
          <svg width="16" height="16" viewBox="0 0 16 16">
            <rect x="4" y="1" width="12" height="14" rx="1" fill="#33c481" />
            <path d="M10 1h6v7h-6z" fill="#21a366" />
            <path d="M10 8h6v7h-6z" fill="#107c41" />
            <rect x="0" y="3.500" width="9" height="9" rx="1" fill="#185c37" />
            <text x="4.500" y="10.500" textAnchor="middle" fontSize="7.500" fontWeight="700" fill="#fff" fontFamily="Noto Sans">x</text>
          </svg>
        </TB>
        <div className="flex-1" />
        <div className="flex h-full items-center shrink-0">
          <Tray w="w-[28px]">
            <svg width="16" height="17" viewBox="0 0 16 17">
              <circle cx="7.500" cy="8" r="7.500" fill="#3da5e0" />
              <text x="7.500" y="12" textAnchor="middle" fontSize="11" fontWeight="700" fill="#fff" fontFamily="Noto Sans">?</text>
              <path d="M12 9l4 7H8z" fill="#f2c037" />
            </svg>
          </Tray>
          <Tray w="w-[28px]">
            <svg width="13" height="13" viewBox="0 0 13 13">
              <circle cx="5" cy="6" r="1.800" fill="none" stroke="#ddd" />
              <path d="M1 13c0-3 2-4.500 4-4.500S8 10 8 12" fill="none" stroke="#ddd" />
              <circle cx="9" cy="3" r="1.800" fill="none" stroke="#ddd" />
              <path d="M9 6c2 0 3 1.500 3 4" fill="none" stroke="#ddd" />
            </svg>
          </Tray>
          <Tray w="w-[18px]">
            <svg width="9" height="6" viewBox="0 0 9 6"><path d="M.5 5L4.500 1l4 4" fill="none" stroke="#ddd" /></svg>
          </Tray>
          <Tray w="w-[15px]">
            <svg width="12" height="12" viewBox="0 0 12 12">
              <path d="M3.500 1.500h8v6h-8zM1 4.500h5v5H1zM3 11h3" fill="#1d1a19" stroke="#ddd" />
            </svg>
          </Tray>
          <Tray w="w-[15px]">
            <svg width="12" height="12" viewBox="0 0 12 12">
              <path d="M1 4.500h2L6 2v8L3 7.500H1zM8 4c1 1 1 3 0 4M10 3c1.500 2 1.500 4 0 6" fill="none" stroke="#bbb" strokeWidth=".9" />
            </svg>
          </Tray>
          <Tray w="w-[30px]"><span className="text-[8px] text-[#e6e6e6]">FRA</span></Tray>
          <div className="w-[36px] flex flex-col items-center text-[8px] tracking-[-0.4px] leading-[12px] shrink-0 whitespace-nowrap">
            <span>09:04</span>
            <span>03/12/2020</span>
          </div>
          <Tray w="w-[40px]">
            <svg width="14" height="13" viewBox="0 0 14 13">
              <path d="M1 1h12v8.500H8L5.500 12V9.500H1z" fill="none" stroke="#eee" />
            </svg>
          </Tray>
        </div>
      </div>
    </div>
  );
}
